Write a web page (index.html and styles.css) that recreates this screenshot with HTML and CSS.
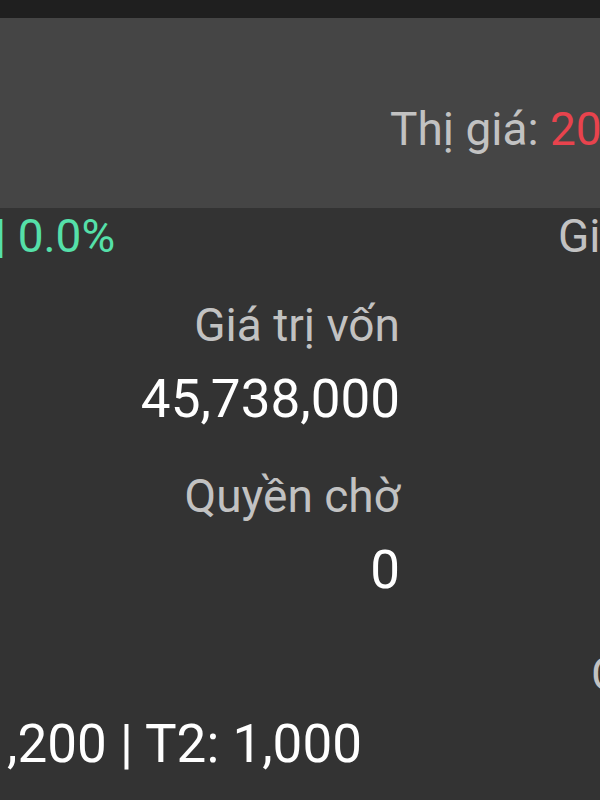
FILE: index.html
```html
<!DOCTYPE html>
<html lang="vi">
<head>
<meta charset="utf-8">
<title>Danh mục</title>
<link rel="stylesheet" href="styles.css">
</head>
<body>
<div class="screen">
  <div class="topbar"></div>
  <div class="header">
    <span class="label">Thị giá: </span><span class="down">20,800</span>
  </div>
  <div class="ratio-row">
    <span class="pct up">| 0.0%</span>
    <span class="label">Giá vốn</span>
  </div>
  <div class="stats">
    <div class="stat-label">Giá trị vốn</div>
    <div class="stat-value">45,738,000</div>
    <div class="stat-label gap">Quyền chờ</div>
    <div class="stat-value">0</div>
  </div>
  <div class="edge-row">
    <span class="label">Chờ về</span>
  </div>
  <div class="pending">,200 | T2: 1,000</div>
</div>
</body>
</html>
```
FILE: styles.css
```css
html, body {
  margin: 0;
  padding: 0;
  background: #333333;
}
body {
  width: 600px;
  height: 800px;
  overflow: hidden;
  font-family: Roboto, "Noto Sans", "Liberation Sans", sans-serif;
}
.screen {
  width: 600px;
  height: 800px;
  overflow: hidden;
  white-space: nowrap;
}
.topbar {
  height: 18px;
  background: #1f1f1f;
}
.header {
  height: 190px;
  box-sizing: border-box;
  background: #454545;
  padding-top: 84px;
  padding-left: 390px;
  font-size: 46px;
  line-height: 54px;
  overflow: hidden;
}
.label {
  color: #c2c2c2;
}
.down {
  color: #e8434d;
}
.up {
  color: #55e0a9;
}
.ratio-row {
  display: flex;
  font-size: 46px;
  line-height: 54px;
  padding-top: 1px;
  overflow: hidden;
}
.pct {
  flex: none;
  width: 563px;
  margin-left: -5px;
}
.stats {
  width: 400px;
  text-align: right;
  padding-top: 35px;
}
.stat-label {
  font-size: 46px;
  line-height: 54px;
  color: #c2c2c2;
}
.stat-label.gap {
  margin-top: 39px;
}
.stat-value {
  font-size: 53px;
  line-height: 62px;
  color: #ffffff;
  margin-top: 16px;
}
.edge-row {
  margin-top: 46px;
  padding-left: 591px;
  font-size: 46px;
  line-height: 54px;
  overflow: hidden;
}
.pending {
  margin-top: 12px;
  padding-left: 7px;
  font-size: 53px;
  line-height: 62px;
  color: #ffffff;
}
```
